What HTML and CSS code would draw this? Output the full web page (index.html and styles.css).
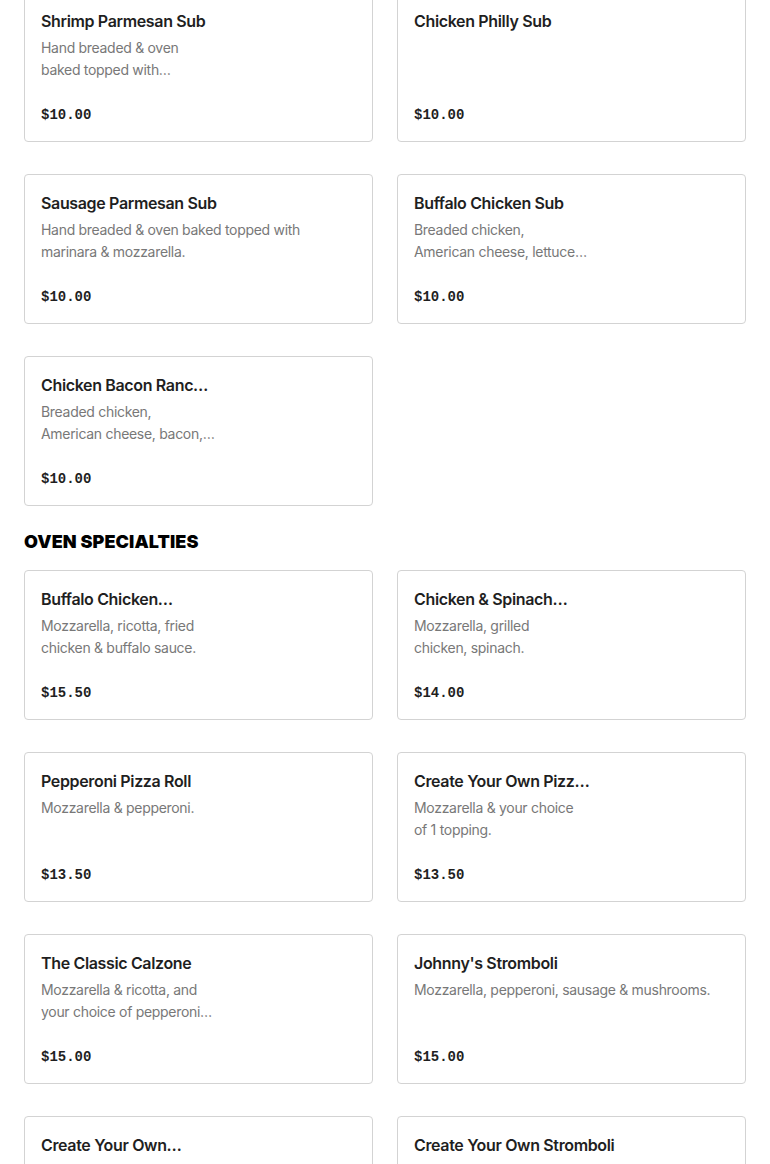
FILE: index.html
```html
<!DOCTYPE html>
<html lang="en">
<head>
  <meta charset="UTF-8" />
  <meta name="viewport" content="width=device-width, initial-scale=1" />
  <title>Menu</title>
  <link rel="stylesheet" href="styles.css">
</head>
<body>
  <main class="menu">
    <!-- SUBS -->
    <section class="menu-section">
      <div class="item-grid">
        <div class="item-card">
          <h3 class="item-name">Shrimp Parmesan Sub</h3>
          <p class="item-desc">Hand breaded &amp; oven<br>baked topped with…</p>
          <span class="item-price">$10.00</span>
        </div>
        <div class="item-card">
          <h3 class="item-name">Chicken Philly Sub</h3>
          <p class="item-desc"></p>
          <span class="item-price">$10.00</span>
        </div>
        <div class="item-card">
          <h3 class="item-name">Sausage Parmesan Sub</h3>
          <p class="item-desc">Hand breaded &amp; oven baked topped with<br>marinara &amp; mozzarella.</p>
          <span class="item-price">$10.00</span>
        </div>
        <div class="item-card">
          <h3 class="item-name">Buffalo Chicken Sub</h3>
          <p class="item-desc">Breaded chicken,<br>American cheese, lettuce…</p>
          <span class="item-price">$10.00</span>
        </div>
        <div class="item-card">
          <h3 class="item-name">Chicken Bacon Ranc…</h3>
          <p class="item-desc">Breaded chicken,<br>American cheese, bacon,…</p>
          <span class="item-price">$10.00</span>
        </div>
      </div>
    </section>

    <!-- OVEN SPECIALTIES -->
    <section class="menu-section">
      <h2 class="section-title">OVEN SPECIALTIES</h2>
      <div class="item-grid">
        <div class="item-card">
          <h3 class="item-name">Buffalo Chicken…</h3>
          <p class="item-desc">Mozzarella, ricotta, fried<br>chicken &amp; buffalo sauce.</p>
          <span class="item-price">$15.50</span>
        </div>
        <div class="item-card">
          <h3 class="item-name">Chicken &amp; Spinach…</h3>
          <p class="item-desc">Mozzarella, grilled<br>chicken, spinach.</p>
          <span class="item-price">$14.00</span>
        </div>
        <div class="item-card">
          <h3 class="item-name">Pepperoni Pizza Roll</h3>
          <p class="item-desc">Mozzarella &amp; pepperoni.</p>
          <span class="item-price">$13.50</span>
        </div>
        <div class="item-card">
          <h3 class="item-name">Create Your Own Pizz…</h3>
          <p class="item-desc">Mozzarella &amp; your choice<br>of 1 topping.</p>
          <span class="item-price">$13.50</span>
        </div>
        <div class="item-card">
          <h3 class="item-name">The Classic Calzone</h3>
          <p class="item-desc">Mozzarella &amp; ricotta, and<br>your choice of pepperoni…</p>
          <span class="item-price">$15.00</span>
        </div>
        <div class="item-card">
          <h3 class="item-name">Johnny's Stromboli</h3>
          <p class="item-desc">Mozzarella, pepperoni, sausage &amp; mushrooms.</p>
          <span class="item-price">$15.00</span>
        </div>
        <div class="item-card">
          <h3 class="item-name">Create Your Own…</h3>
          <p class="item-desc">Mozzarella &amp; ricotta with your<br>choice of 1 topping.</p>
          <span class="item-price">$15.00</span>
        </div>
        <div class="item-card">
          <h3 class="item-name">Create Your Own Stromboli</h3>
          <p class="item-desc">Mozzarella &amp; your choice of 2 toppings.</p>
          <span class="item-price">$15.00</span>
        </div>
      </div>
    </section>
  </main>
</body>
</html>
```

FILE: styles.css
```css
:root {
  --texto: #1f1f1f;
  --cinza: #787878;
  --borda: #d3d3d3;
}

body {
  margin: 0;
  padding: 0 24px;
  background: #ffffff;
  color: var(--texto);
  font-family: Inter, 'Noto Sans', sans-serif;
}

.menu {
  margin-top: -8px;
  display: flex;
  flex-direction: column;
  gap: 24px;
}

.section-title {
  margin: 0 0 16px;
  font-size: 18px;
  line-height: 24px;
  font-weight: 900;
  letter-spacing: 0.1px;
  color: #000;
}

.item-grid {
  display: grid;
  grid-template-columns: 1fr 1fr;
  column-gap: 24px;
  row-gap: 32px;
}

.item-card {
  box-sizing: border-box;
  height: 150px;
  padding: 16px 16px 15px;
  border: 1px solid var(--borda);
  border-radius: 4px;
  display: flex;
  flex-direction: column;
  background: #fff;
}

.item-name {
  margin: 0;
  font-size: 16px;
  line-height: 24px;
  font-weight: 600;
  letter-spacing: -0.35px;
  white-space: nowrap;
  overflow: hidden;
  text-overflow: ellipsis;
}

.item-desc {
  margin: 4px 0 0;
  font-size: 14px;
  line-height: 22px;
  letter-spacing: -0.3px;
  color: var(--cinza);
  max-height: 44px;
  overflow: hidden;
}

.item-price {
  margin-top: auto;
  font-family: 'Liberation Mono', monospace;
  font-size: 14px;
  line-height: 22px;
  font-weight: 700;
  color: var(--texto);
}
```
